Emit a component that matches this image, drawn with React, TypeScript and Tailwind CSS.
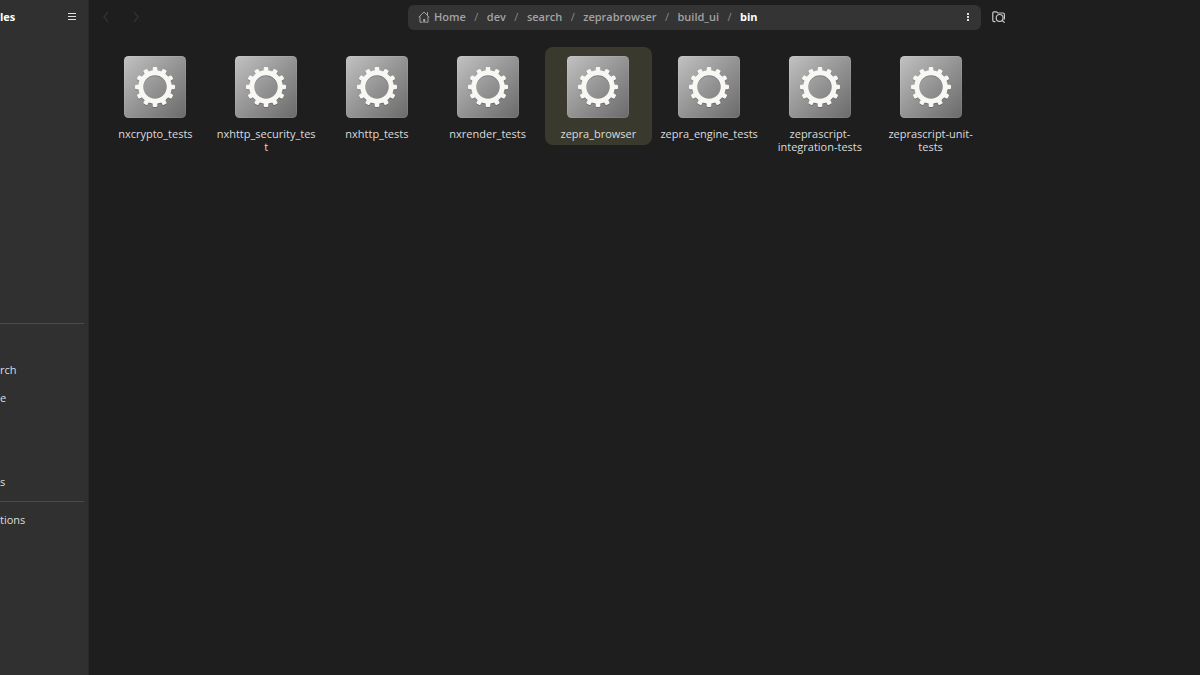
import { useState } from 'react';

interface FileEntry {
  name: string;
  lines: string[];
}

const FILES: FileEntry[] = [
  { name: 'nxcrypto_tests', lines: ['nxcrypto_tests'] },
  { name: 'nxhttp_security_test', lines: ['nxhttp_security_tes', 't'] },
  { name: 'nxhttp_tests', lines: ['nxhttp_tests'] },
  { name: 'nxrender_tests', lines: ['nxrender_tests'] },
  { name: 'zepra_browser', lines: ['zepra_browser'] },
  { name: 'zepra_engine_tests', lines: ['zepra_engine_tests'] },
  { name: 'zeprascript-integration-tests', lines: ['zeprascript-', 'integration-tests'] },
  { name: 'zeprascript-unit-tests', lines: ['zeprascript-unit-', 'tests'] },
];

const CRUMBS = ['Home', 'dev', 'search', 'zeprabrowser', 'build_ui', 'bin'];

const PLACES = ['', 'rch', 'e', '', '', 's'];

const TEETH = [0, 30, 60, 90, 120, 150, 180, 210, 240, 270, 300, 330];

function HomeIcon() {
  return (
    <svg className="h-3 w-3 shrink-0" viewBox="0 0 12 12" fill="none" stroke="currentColor" strokeWidth="1">
      <path d="M0.7 6.3 L6 1 L11.3 6.3 M2 5.4 V11.2 H4.6 M7.4 11.2 H10 V5.4 M9.5 4 V1.2" />
      <path d="M5.2 11.5 V8 H7.2 V11.5 Z" fill="currentColor" stroke="none" />
    </svg>
  );
}

function FolderSearchIcon() {
  return (
    <svg className="h-3 w-[14px]" viewBox="0 0 14 12" fill="none" stroke="currentColor" strokeWidth="1.2">
      <path d="M3.4 10.6 H2 Q0.8 10.6 0.8 9.4 V2 Q0.8 0.8 2 0.8 H4.4 L5.8 2 H11 Q12.4 2 12.4 3.4 V8.6" />
      <circle cx="7.6" cy="6.9" r="3.4" />
      <path d="M10 9.3 L12.6 11.6" />
    </svg>
  );
}

function GearTile({ id }: { id: string }) {
  return (
    <svg className="h-16 w-16" viewBox="0 0 64 64" aria-hidden="true">
      <defs>
        <linearGradient id={id} x1="0" y1="0" x2="1" y2="1">
          <stop offset="0" stopColor="#c2c2c2" />
          <stop offset="0.5" stopColor="#949494" />
          <stop offset="1" stopColor="#6a6a6a" />
        </linearGradient>
      </defs>
      <rect x="1" y="1" width="62" height="62" rx="4.5" fill={`url(#${id})`} />
      <rect x="1.5" y="1.5" width="61" height="61" rx="4" fill="none" stroke="#ffffff" strokeOpacity="0.08" />
      <g transform="translate(0 1)" opacity="0.18">
        <circle cx="32" cy="32" r="14.2" fill="none" stroke="#000000" strokeWidth="5" />
        {TEETH.map((angle) => (
          <rect key={angle} x="29.6" y="12" width="4.8" height="5" rx="1.3" transform={`rotate(${angle} 32 32)`} />
        ))}
      </g>
      <circle cx="32" cy="32" r="14.2" fill="none" stroke="#f8f7f4" strokeWidth="5" />
      {TEETH.map((angle) => (
        <path
          key={angle}
          d="M28.6 17 Q29.7 16.4 29.7 15 V13.2 Q29.7 12 30.9 12 H33.1 Q34.3 12 34.3 13.2 V15 Q34.3 16.4 35.4 17 Z"
          fill="#f8f7f4"
          transform={`rotate(${angle} 32 32)`}
        />
      ))}
    </svg>
  );
}

function Sidebar() {
  return (
    <aside className="w-[89px] shrink-0 border-r border-[#292929] bg-[#303030] text-[#dedede]">
      <div className="flex h-[34px] items-center justify-between pr-[11px]">
        <h1 className="text-[11px] font-bold text-white">les</h1>
        <button type="button" aria-label="Main menu" className="p-px">
          <svg className="h-2 w-2" viewBox="0 0 8 8" fill="none" stroke="currentColor" strokeWidth="1">
            <path d="M0 0.5 H8 M0 3.5 H8 M0 6.5 H8" />
          </svg>
        </button>
      </div>
      <nav className="pt-[289px] text-[11px]">
        <hr className="mr-1 border-[#4a4a4a]" />
        <ul className="py-1">
          {PLACES.map((place, i) => (
            <li key={i} className="h-7">
              {place && (
                <a href="#" className="flex h-7 items-center">
                  {place}
                </a>
              )}
            </li>
          ))}
        </ul>
        <hr className="mt-px mr-1 border-[#4a4a4a]" />
        <a href="#" className="mt-1 flex h-7 items-center">
          tions
        </a>
      </nav>
    </aside>
  );
}

function PathBar() {
  return (
    <nav className="flex h-[25px] max-w-[573px] flex-1 items-center rounded-md bg-[#343434] pr-2 pl-[10px] text-[11px] font-semibold text-[#a3a3a3]">
      <ol className="flex flex-1 items-center">
        {CRUMBS.map((crumb, i) => (
          <li key={crumb} className="flex items-center">
            {i > 0 && <span className="w-[21px] text-center font-normal text-[#8a8a8a]">/</span>}
            <a
              href="#"
              className={i === CRUMBS.length - 1 ? 'font-bold text-white' : 'flex items-center gap-1'}
            >
              {i === 0 && <HomeIcon />}
              {crumb}
            </a>
          </li>
        ))}
      </ol>
      <button type="button" aria-label="Folder menu" className="px-1 text-[#e0e0e0]">
        <svg className="h-2 w-[2px]" viewBox="0 0 2 8" fill="currentColor">
          <path d="M0 0 H2 V2 H0 Z M0 3 H2 V5 H0 Z M0 6 H2 V8 H0 Z" />
        </svg>
      </button>
    </nav>
  );
}

export default function App() {
  const [selected, setSelected] = useState('zepra_browser');

  return (
    <div className="flex min-h-screen bg-[#1e1e1e] font-['Open_Sans',sans-serif]">
      <Sidebar />
      <div className="min-w-0 flex-1">
        <header className="flex h-[34px] items-center">
          <div className="flex w-[319px] shrink-0 gap-5 pl-[12px] text-[#323232]">
            <button type="button" aria-label="Back" disabled>
              <svg className="h-3 w-[10px]" viewBox="0 0 10 12" fill="none" stroke="currentColor" strokeWidth="1.3">
                <path d="M7 1 L3 6 L7 11" />
              </svg>
            </button>
            <button type="button" aria-label="Forward" disabled>
              <svg className="h-3 w-[10px]" viewBox="0 0 10 12" fill="none" stroke="currentColor" strokeWidth="1.3">
                <path d="M3 1 L7 6 L3 11" />
              </svg>
            </button>
          </div>
          <PathBar />
          <button type="button" aria-label="Search folder" className="ml-[11px] text-[#c8c8c8]">
            <FolderSearchIcon />
          </button>
        </header>

        <main className="px-[13px] pt-[13px]">
          <div className="grid max-w-[882px] grid-cols-8 items-start gap-1">
            {FILES.map((file) => (
              <button
                key={file.name}
                type="button"
                aria-label={file.name}
                aria-pressed={selected === file.name}
                onClick={() => setSelected(file.name)}
                className={`flex flex-col items-center rounded-lg pt-2 pb-[5px] ${
                  selected === file.name ? 'bg-[#39392d]' : ''
                }`}
              >
                <GearTile id={`tile-${file.name}`} />
                <span className="mt-2 text-[11px] leading-[13px] whitespace-nowrap text-[#dcdcdc]">
                  {file.lines.map((line) => (
                    <span key={line} className="block">
                      {line}
                    </span>
                  ))}
                </span>
              </button>
            ))}
          </div>
        </main>
      </div>
    </div>
  );
}
